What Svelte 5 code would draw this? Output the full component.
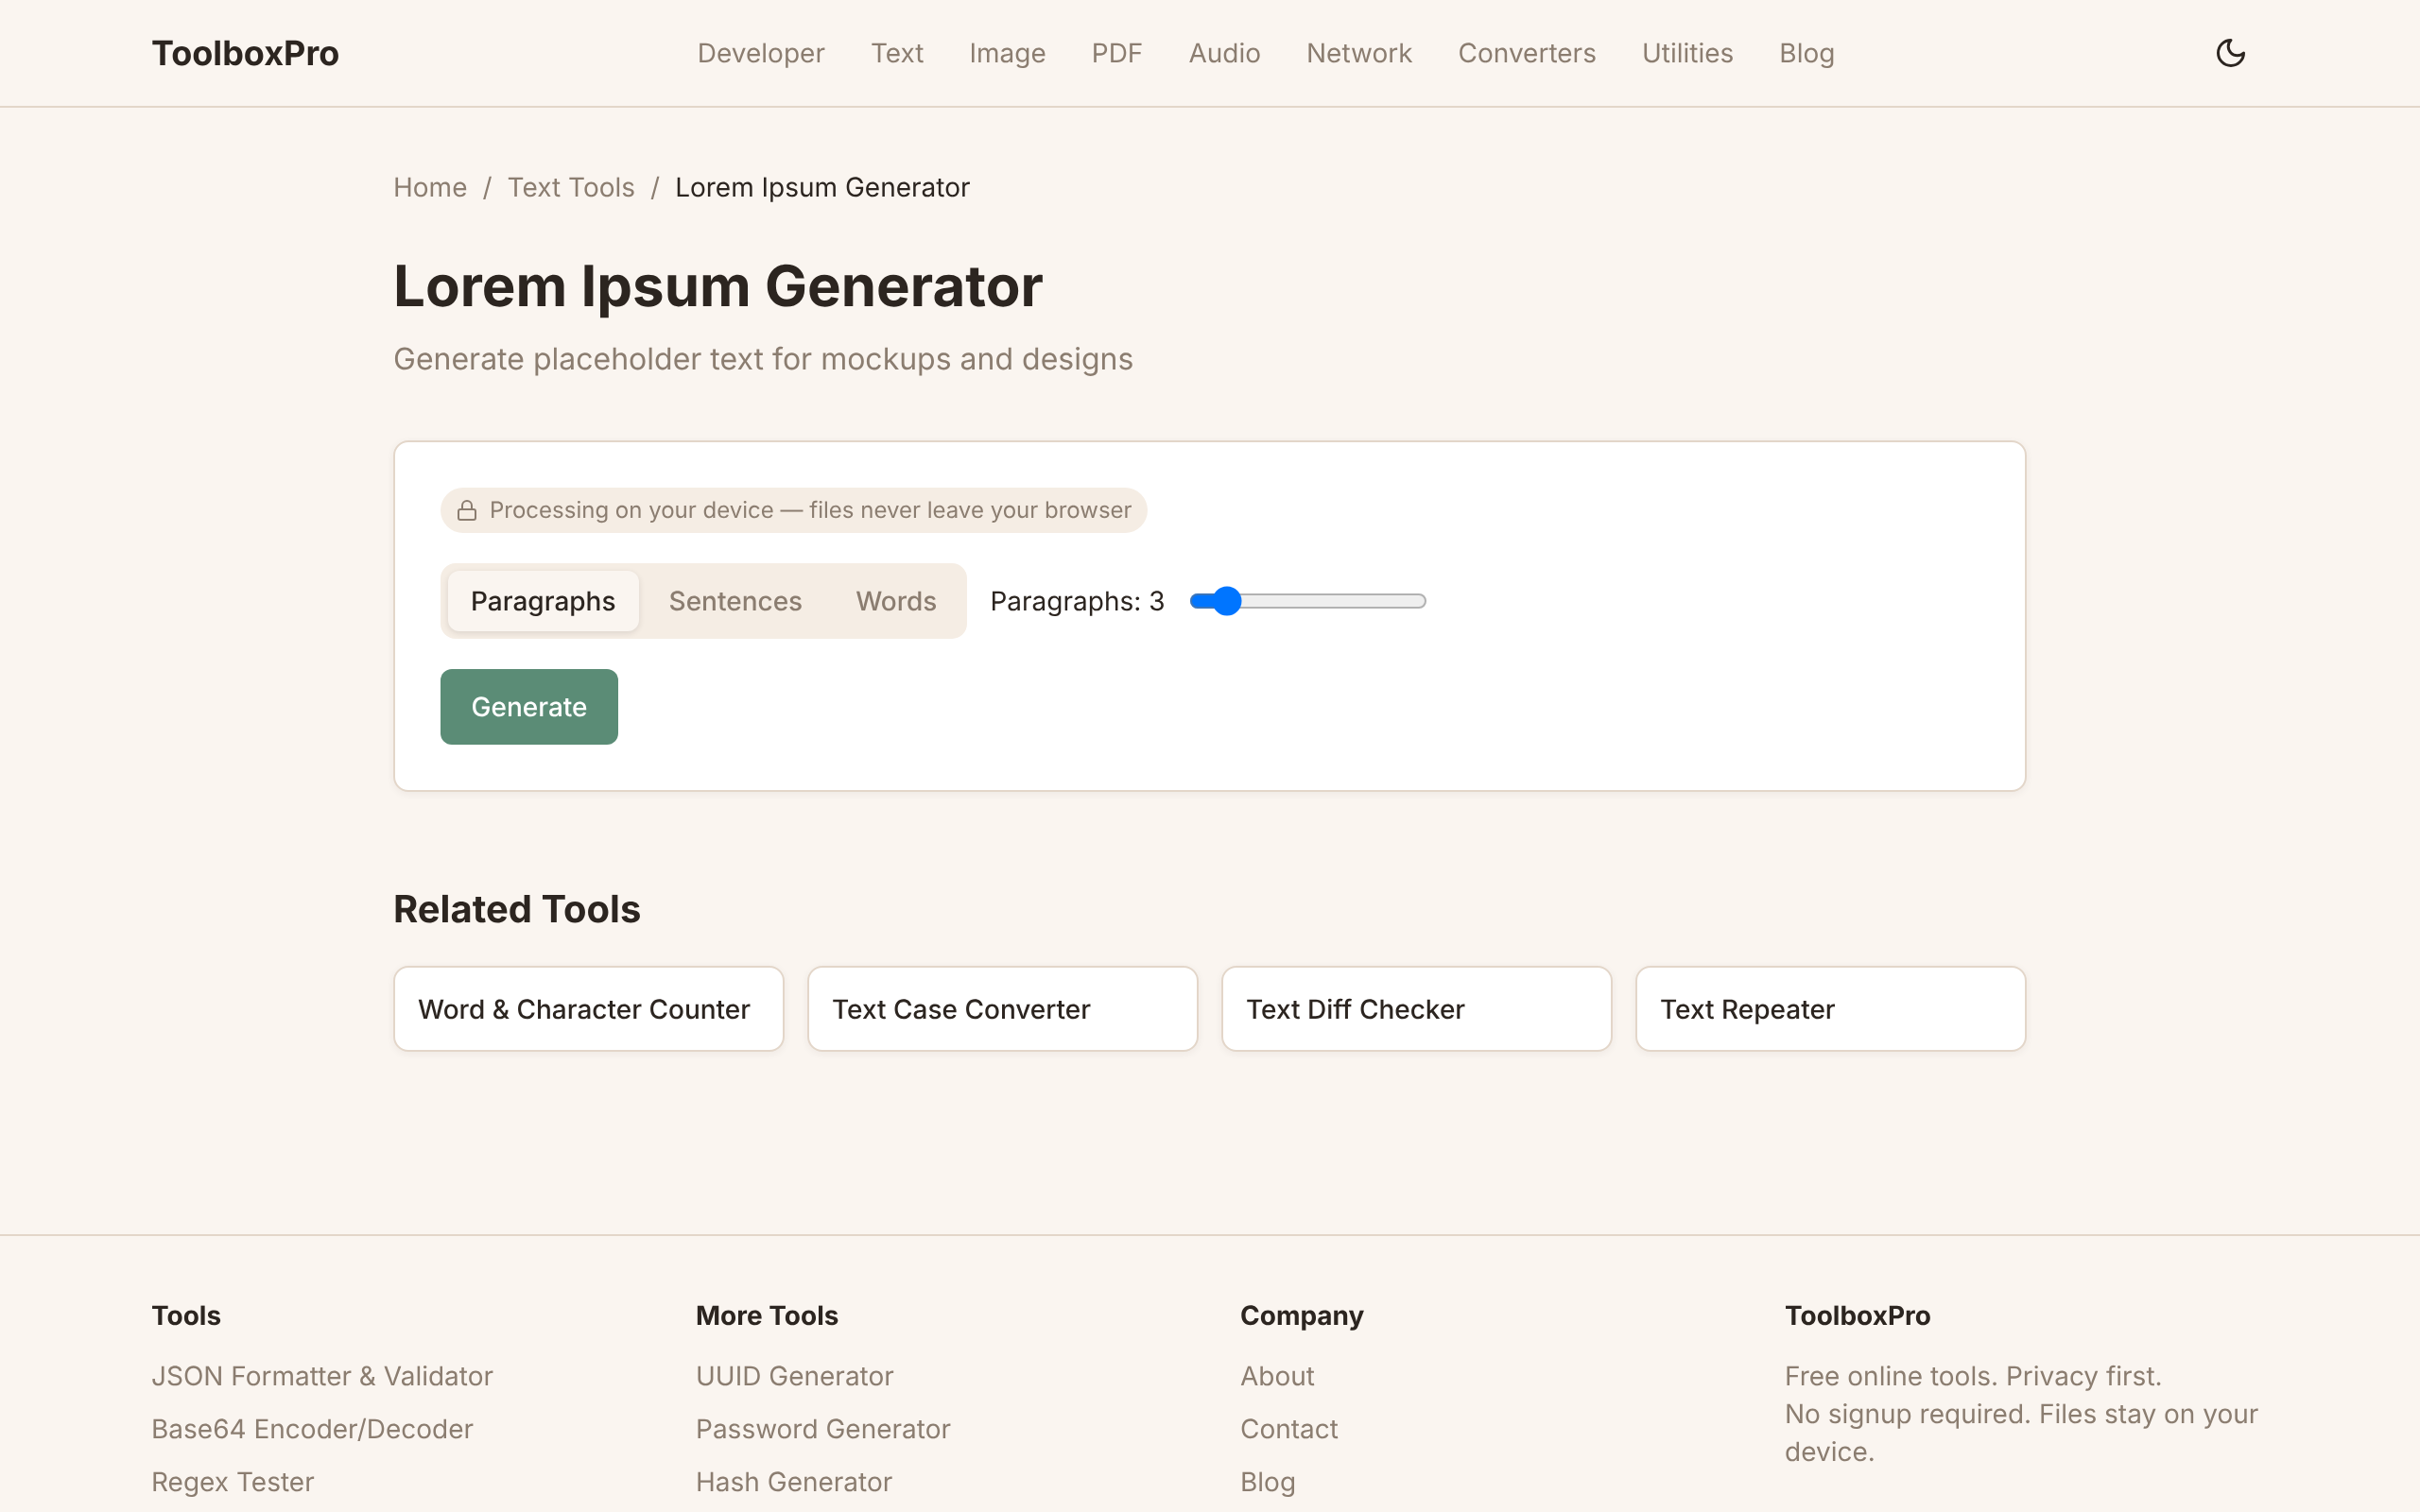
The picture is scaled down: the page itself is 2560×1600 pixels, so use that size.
<script>
	const navLinks = ['Developer', 'Text', 'Image', 'PDF', 'Audio', 'Network', 'Converters', 'Utilities', 'Blog'];
	const modes = ['Paragraphs', 'Sentences', 'Words'];
	const related = ['Word & Character Counter', 'Text Case Converter', 'Text Diff Checker', 'Text Repeater'];
	const footerCols = [
		{ title: 'Tools', links: ['JSON Formatter & Validator', 'Base64 Encoder/Decoder', 'Regex Tester'] },
		{ title: 'More Tools', links: ['UUID Generator', 'Password Generator', 'Hash Generator'] },
		{ title: 'Company', links: ['About', 'Contact', 'Blog'] }
	];

	let mode = $state('Paragraphs');
	let count = $state(3);
	let unit = $derived(mode);
</script>

<div class="page">
	<header class="site-header">
		<a class="logo" href="#top">ToolboxPro</a>
		<nav class="nav">
			{#each navLinks as link}
				<a href="#top">{link}</a>
			{/each}
		</nav>
		<button class="theme" type="button" aria-label="Toggle theme">
			<svg width="36" height="36" viewBox="0 0 24 24" fill="none" stroke="currentColor" stroke-width="2" stroke-linecap="round" stroke-linejoin="round">
				<path d="M12 3a6 6 0 0 0 9 9 9 9 0 1 1-9-9Z" />
			</svg>
		</button>
	</header>

	<main class="main">
		<div class="crumbs">
			<a href="#top">Home</a>
			<span>/</span>
			<a href="#top">Text Tools</a>
			<span>/</span>
			<b>Lorem Ipsum Generator</b>
		</div>

		<h1>Lorem Ipsum Generator</h1>
		<p class="sub">Generate placeholder text for mockups and designs</p>

		<section class="card">
			<div class="pill">
				<svg width="24" height="24" viewBox="0 0 24 24" fill="none" stroke="currentColor" stroke-width="2" stroke-linecap="round" stroke-linejoin="round">
					<rect x="3" y="11" width="18" height="11" rx="2" ry="2" />
					<path d="M7 11V7a5 5 0 0 1 10 0v4" />
				</svg>
				Processing on your device — files never leave your browser
			</div>

			<div class="controls">
				<div class="tabs">
					{#each modes as m}
						<button type="button" class="tab" class:active={mode === m} onclick={() => (mode = m)}>{m}</button>
					{/each}
				</div>
				<label class="count" for="count">{unit}: {count}</label>
				<input id="count" class="range" type="range" min="1" max="20" bind:value={count} />
			</div>

			<button class="generate" type="button">Generate</button>
		</section>

		<h2>Related Tools</h2>
		<div class="related">
			{#each related as tool}
				<a class="tool" href="#top">{tool}</a>
			{/each}
		</div>
	</main>

	<footer class="footer">
		<div class="footer-grid">
			{#each footerCols as col}
				<div>
					<h3>{col.title}</h3>
					<ul>
						{#each col.links as link}
							<li><a href="#top">{link}</a></li>
						{/each}
					</ul>
				</div>
			{/each}
			<div>
				<h3>ToolboxPro</h3>
				<p>Free online tools. Privacy first.<br />No signup required. Files stay on your device.</p>
			</div>
		</div>
	</footer>
</div>

<style>
	:global(html) {
		overflow: hidden;
	}

	:global(body) {
		background: #faf5f0;
		color: #2c2520;
		font-family: Inter, 'Liberation Sans', sans-serif;
		font-size: 28px;
		line-height: 46px;
		text-rendering: geometricPrecision;
	}

	/* own layer, text comes out with grey antialiasing */
	.page {
		will-change: transform;
	}

	a {
		color: inherit;
		text-decoration: none;
	}

	.site-header {
		display: flex;
		align-items: center;
		justify-content: space-between;
		height: 112px;
		padding: 0 160px;
		border-bottom: 2px solid #e3d6c9;
	}

	.logo {
		font-size: 36px;
		font-weight: 700;
	}

	.nav {
		display: flex;
		gap: 48px;
		color: #8b7d70;
	}

	.theme {
		display: flex;
		align-items: center;
		justify-content: center;
		width: 80px;
		height: 80px;
		padding: 0;
		border: 0;
		background: none;
		color: #2c2520;
	}

	.main {
		max-width: 1728px;
		margin: 0 auto;
		padding: 64px 0 193px;
	}

	.crumbs {
		display: flex;
		gap: 16px;
		line-height: 40px;
		color: #8b7d70;
	}

	.crumbs b {
		font-weight: 400;
		color: #2c2520;
	}

	h1 {
		margin: 49px 0 0;
		font-size: 60px;
		font-weight: 700;
		line-height: 72px;
	}

	.sub {
		margin: 15px 0 0;
		font-size: 32px;
		line-height: 51px;
		color: #8b7d70;
	}

	.card {
		margin-top: 61px;
		padding: 48px;
		background: #fff;
		border: 2px solid #e3d6c9;
		border-radius: 16px;
		box-shadow: 0 2px 8px rgba(44, 37, 32, 0.06);
	}

	.pill {
		display: inline-flex;
		align-items: center;
		gap: 12px;
		height: 48px;
		padding: 0 16px;
		border-radius: 24px;
		background: #f5ede4;
		color: #8b7d70;
		font-size: 24px;
		vertical-align: top;
	}

	.controls {
		display: flex;
		align-items: center;
		gap: 24px;
		margin-top: 32px;
	}

	.tabs {
		display: flex;
		gap: 8px;
		padding: 8px;
		border-radius: 16px;
		background: #f5ede4;
	}

	.tab {
		height: 64px;
		padding: 0 24px;
		border: 0;
		border-radius: 12px;
		background: none;
		color: #8b7d70;
		font: inherit;
		font-weight: 500;
		text-rendering: inherit;
	}

	.tab.active {
		background: #faf5f0;
		color: #2c2520;
		box-shadow: 0 2px 6px rgba(44, 37, 32, 0.12);
	}

	.range {
		zoom: 2;
		width: 126px;
		margin: 0 0 0 1px;
	}

	.generate {
		display: block;
		width: 188px;
		height: 80px;
		margin-top: 32px;
		padding: 0;
		border: 0;
		border-radius: 12px;
		background: #5b8c76;
		color: #fff;
		font: inherit;
		font-weight: 500;
		text-rendering: inherit;
	}

	h2 {
		margin: 96px 0 0;
		font-size: 40px;
		font-weight: 700;
		line-height: 56px;
	}

	.related {
		display: grid;
		grid-template-columns: repeat(4, 1fr);
		gap: 24px;
		margin-top: 32px;
	}

	.tool {
		padding: 20.5px 24px;
		background: #fff;
		border: 2px solid #e3d6c9;
		border-radius: 16px;
		box-shadow: 0 2px 8px rgba(44, 37, 32, 0.06);
		font-weight: 500;
	}

	.footer {
		padding: 64px 160px;
		border-top: 2px solid #e3d6c9;
	}

	.footer-grid {
		display: grid;
		grid-template-columns: repeat(4, 1fr);
		gap: 64px;
	}

	h3 {
		margin: 0 0 24px;
		font-size: 28px;
		font-weight: 700;
		line-height: 40px;
	}

	ul {
		display: flex;
		flex-direction: column;
		gap: 16px;
		margin: 0;
		padding: 0;
		list-style: none;
		line-height: 40px;
		color: #8b7d70;
	}

	.footer p {
		margin: 0;
		line-height: 40px;
		color: #8b7d70;
	}
</style>
